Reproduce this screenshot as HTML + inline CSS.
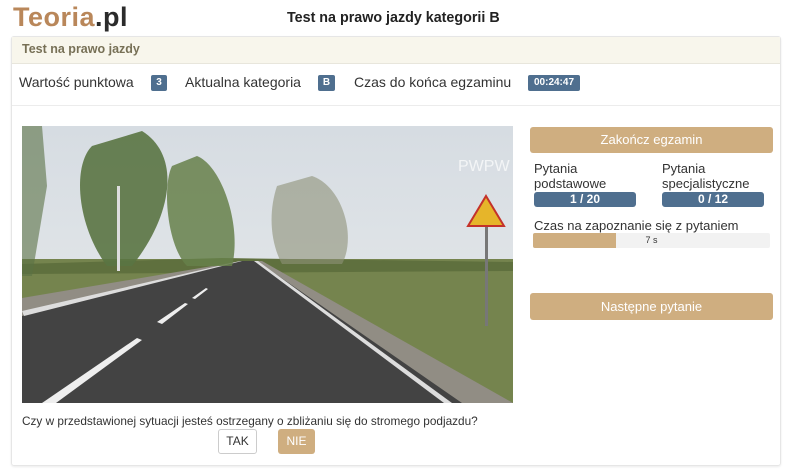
<!DOCTYPE html>
<html><head><meta charset="utf-8"><style>
*{box-sizing:border-box;margin:0;padding:0}
body{width:800px;height:475px;background:#fff;font-family:"Liberation Sans",sans-serif;color:#333;position:relative;overflow:hidden}
.a{position:absolute}
.badge{position:absolute;background:#4f6f8f;color:#fff;font-size:10px;font-weight:bold;text-align:center;border-radius:2px;line-height:16px;height:16px}
.btn{position:absolute;background:#cfae80;color:#fff;font-size:13px;text-align:center;border-radius:3px}
</style></head><body>
<div class="a" style="left:13px;top:2px;font-size:27px;font-weight:bold;letter-spacing:0.5px"><span style="color:#b9875a">Teoria</span><span style="color:#2b2b2b">.pl</span></div>
<div class="a" style="left:287px;top:10px;font-size:14.3px;font-weight:bold;color:#222">Test na prawo jazdy kategorii B</div>
<div class="a" style="left:11px;top:36px;width:770px;height:430px;border:1px solid #e6e6e6;border-radius:3px;box-shadow:0 1px 2px rgba(0,0,0,.08)"></div>
<div class="a" style="left:12px;top:37px;width:768px;height:27px;background:#f8f6ec;border-bottom:1px solid #e8e6dc"></div>
<div class="a" style="left:22px;top:42px;font-size:12.5px;font-weight:bold;color:#777056">Test na prawo jazdy</div>
<div class="a" style="left:19px;top:74px;font-size:14px;color:#333">Wartość punktowa</div>
<div class="badge" style="left:151px;top:75px;width:16px">3</div>
<div class="a" style="left:185px;top:74px;font-size:14px">Aktualna kategoria</div>
<div class="badge" style="left:318px;top:75px;width:17px">B</div>
<div class="a" style="left:354px;top:74px;font-size:14px">Czas do końca egzaminu</div>
<div class="badge" style="left:528px;top:75px;width:52px">00:24:47</div>
<div class="a" style="left:12px;top:105px;width:768px;height:1px;background:#ececec"></div>
<svg class="a" style="left:22px;top:126px" width="491" height="277" viewBox="0 0 491 277">
<defs><linearGradient id="s" x1="0" y1="0" x2="0" y2="1"><stop offset="0" stop-color="#d6dce2"/><stop offset="1" stop-color="#e8ebec"/></linearGradient></defs>
<rect width="491" height="277" fill="url(#s)"/>
<rect y="133" width="491" height="144" fill="#75844e"/>
<path d="M0 138 L200 132 L491 136 L491 145 L0 148Z" fill="#5f703e"/>
<path d="M0 172 L220 135 L240 135 L491 277 L0 277Z" fill="#918d84"/>
<path d="M0 190 L218 135 L235 135 L440 277 L0 277Z" fill="#434343"/>
<path d="M0 185 L218 135 L220 135 L2 190Z" fill="#ddd"/>
<path d="M232 135 L236 135 L430 277 L422 277Z" fill="#ddd"/>
<path d="M20 277 L115 212 L120 214 L34 277Z" fill="#eee"/>
<path d="M135 196 L163 177 L166 178 L140 198Z" fill="#eee"/>
<path d="M170 172 L184 162 L186 163 L173 173Z" fill="#eee"/>
<path d="M70 20 C50 40 55 100 85 140 L110 140 C150 90 160 30 120 5Z" fill="#5a7442" opacity=".9"/>
<rect x="95" y="60" width="3" height="85" fill="#ddd"/>
<path d="M150 40 C140 60 145 120 165 140 L210 140 C220 100 200 40 175 30Z" fill="#66804a" opacity=".85"/>
<path d="M255 60 C245 90 250 120 260 138 L320 138 C335 110 320 60 290 50Z" fill="#8d9178" opacity=".6"/>
<path d="M0 0 L20 0 L25 60 L10 150 L0 150Z" fill="#5a7244" opacity=".6"/>
<rect x="463" y="100" width="3" height="100" fill="#777"/>
<path d="M464 70 L482 100 L446 100Z" fill="#e6b52a" stroke="#c4322a" stroke-width="2"/>
<text x="436" y="45" font-size="16" fill="#fff" opacity=".7" font-family="Liberation Sans">PWPW</text>
</svg>
<div class="btn" style="left:530px;top:127px;width:243px;height:26px;line-height:26px">Zakończ egzamin</div>
<div class="a" style="left:534px;top:161px;font-size:13px;line-height:15px">Pytania<br>podstawowe</div>
<div class="a" style="left:662px;top:161px;font-size:13px;line-height:15px">Pytania<br>specjalistyczne</div>
<div class="badge" style="left:534px;top:192px;width:102px;height:15px;line-height:15px;font-size:12px;border-radius:3px">1 / 20</div>
<div class="badge" style="left:662px;top:192px;width:102px;height:15px;line-height:15px;font-size:12px;border-radius:3px">0 / 12</div>
<div class="a" style="left:534px;top:218px;font-size:13px">Czas na zapoznanie się z pytaniem</div>
<div class="a" style="left:533px;top:233px;width:237px;height:15px;background:#f2f2f2;border-radius:2px"></div>
<div class="a" style="left:533px;top:233px;width:83px;height:15px;background:#cfae80;border-radius:2px 0 0 2px"></div>
<div class="a" style="left:533px;top:233px;width:237px;text-align:center;font-size:9px;line-height:15px;color:#333">7 s</div>
<div class="btn" style="left:530px;top:293px;width:243px;height:27px;line-height:27px">Następne pytanie</div>
<div class="a" style="left:22px;top:414px;font-size:11.8px;color:#333">Czy w przedstawionej sytuacji jesteś ostrzegany o zbliżaniu się do stromego podjazdu?</div>
<div class="a" style="left:218px;top:429px;width:39px;height:25px;border:1px solid #ccc;border-radius:3px;font-size:12px;text-align:center;line-height:23px">TAK</div>
<div class="btn" style="left:278px;top:429px;width:37px;height:25px;line-height:25px;font-size:12px">NIE</div>
</body></html>
